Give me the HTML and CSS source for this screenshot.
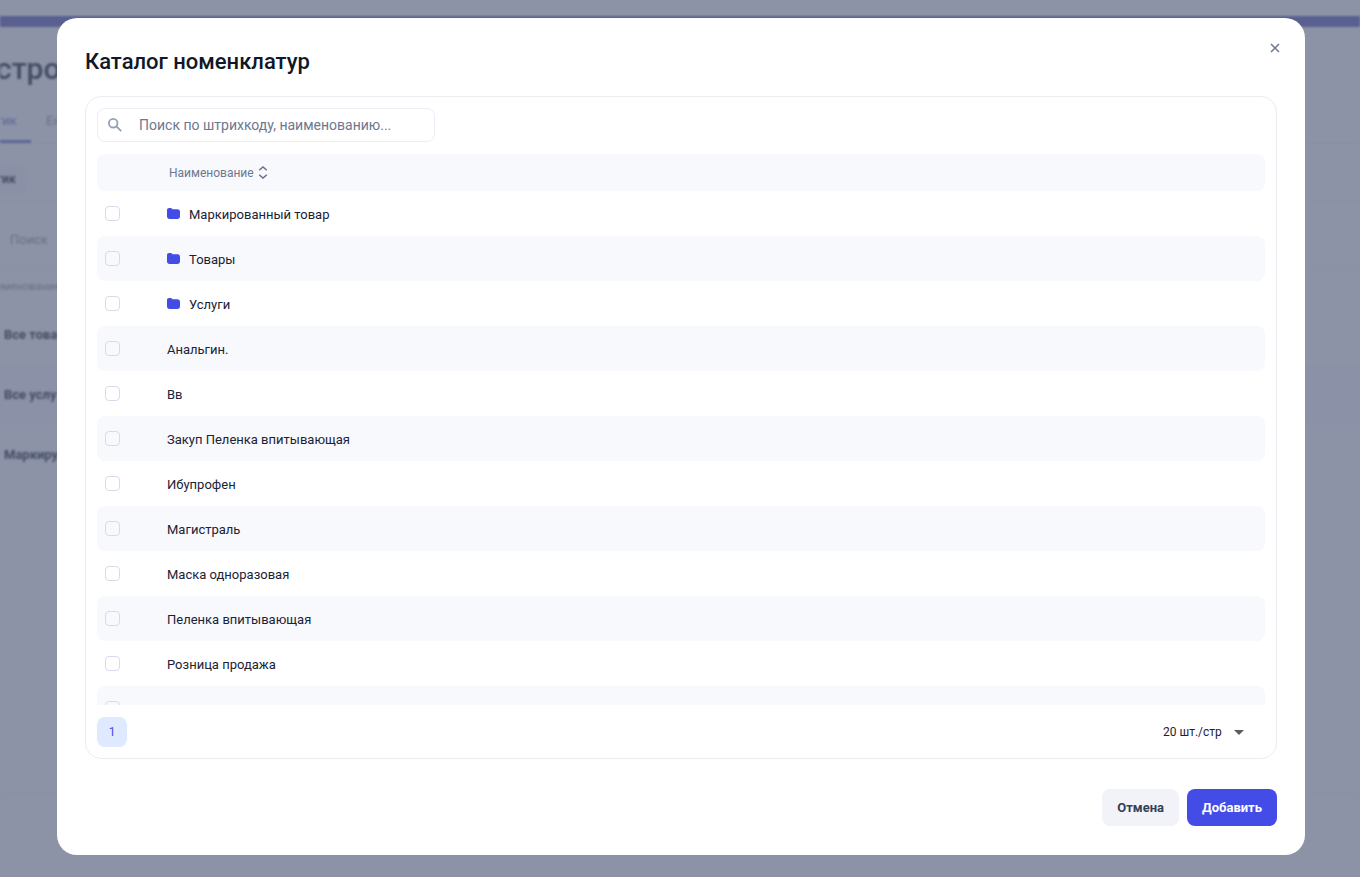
FILE: index.html
```html
<!DOCTYPE html>
<html lang="ru">
<head>
<meta charset="utf-8">
<meta name="viewport" content="width=device-width, initial-scale=1">
<title>Каталог номенклатур</title>
<link rel="stylesheet" href="styles.css">
</head>
<body>
<svg class="sprite" aria-hidden="true">
  <symbol id="folder" viewBox="0 0 13 11"><path d="M0 2.2C0 .8.8 0 2.1 0h1.6c.7 0 1 .2 1.400.7l.4.5h4.800C12 1.200 13 2.200 13 3.900v4.300C13 10 12 11 10.300 11H2.700C1 11 0 10 0 8.200z"/></symbol>
</svg>

<div class="page" aria-hidden="true">
  <div class="page-top"></div>
  <div class="page-bar"></div>
  <div class="page-title">стро</div>
  <div class="page-tabs"><span class="page-tab page-tab-active">тик</span><span class="page-tab">Ен</span></div>
  <div class="page-tools"><span class="page-chip">тик</span></div>
  <div class="page-search">Поиск</div>
  <div class="page-head">именование</div>
  <div class="page-row">Все това</div>
  <div class="page-row page-row-alt">Все услу</div>
  <div class="page-row">Маркиру</div>
  <div class="page-foot"></div>
</div>

<div class="overlay">
  <section class="modal" role="dialog" aria-modal="true" aria-labelledby="title">
    <header class="modal-head">
      <h1 class="modal-title" id="title">Каталог номенклатур</h1>
      <button class="close" type="button" aria-label="Закрыть">
        <svg width="10" height="10" viewBox="0 0 10 10"><path d="M1 1l8 8M9 1L1 9"/></svg>
      </button>
    </header>

    <div class="panel">
      <label class="search">
        <svg class="search-icon" width="14" height="14" viewBox="0 0 14 14"><circle cx="5.200" cy="5.200" r="4.300"/><path d="M8.400 8.400l4.800 4.800"/></svg>
        <input class="search-input" type="text" placeholder="Поиск по штрихкоду, наименованию..." aria-label="Поиск по штрихкоду, наименованию">
      </label>

      <div class="scroller">
        <table class="table">
          <thead>
            <tr>
              <th class="cell-check"></th>
              <th class="cell-name"><button class="sort" type="button">Наименование
                <svg width="10" height="13" viewBox="0 0 10 13"><path d="M1.200 4.200L5 1l3.800 3.200M1.200 8.800L5 12l3.800-3.200"/></svg></button></th>
            </tr>
          </thead>
          <tbody>
            <tr><td class="cell-check"><input class="check" type="checkbox" id="r1"></td><td class="cell-name"><label class="name" for="r1"><svg class="folder" width="13" height="11"><use href="#folder"/></svg>Маркированный товар</label></td></tr>
            <tr><td class="cell-check"><input class="check" type="checkbox" id="r2"></td><td class="cell-name"><label class="name" for="r2"><svg class="folder" width="13" height="11"><use href="#folder"/></svg>Товары</label></td></tr>
            <tr><td class="cell-check"><input class="check" type="checkbox" id="r3"></td><td class="cell-name"><label class="name" for="r3"><svg class="folder" width="13" height="11"><use href="#folder"/></svg>Услуги</label></td></tr>
            <tr><td class="cell-check"><input class="check" type="checkbox" id="r4"></td><td class="cell-name"><label class="name" for="r4">Анальгин.</label></td></tr>
            <tr><td class="cell-check"><input class="check" type="checkbox" id="r5"></td><td class="cell-name"><label class="name" for="r5">Вв</label></td></tr>
            <tr><td class="cell-check"><input class="check" type="checkbox" id="r6"></td><td class="cell-name"><label class="name" for="r6">Закуп Пеленка впитывающая</label></td></tr>
            <tr><td class="cell-check"><input class="check" type="checkbox" id="r7"></td><td class="cell-name"><label class="name" for="r7">Ибупрофен</label></td></tr>
            <tr><td class="cell-check"><input class="check" type="checkbox" id="r8"></td><td class="cell-name"><label class="name" for="r8">Магистраль</label></td></tr>
            <tr><td class="cell-check"><input class="check" type="checkbox" id="r9"></td><td class="cell-name"><label class="name" for="r9">Маска одноразовая</label></td></tr>
            <tr><td class="cell-check"><input class="check" type="checkbox" id="r10"></td><td class="cell-name"><label class="name" for="r10">Пеленка впитывающая</label></td></tr>
            <tr><td class="cell-check"><input class="check" type="checkbox" id="r11"></td><td class="cell-name"><label class="name" for="r11">Розница продажа</label></td></tr>
            <tr><td class="cell-check"><input class="check" type="checkbox" id="r12"></td><td class="cell-name"></td></tr>
          </tbody>
        </table>
      </div>

      <div class="pager">
        <button class="page-number" type="button" aria-current="page">1</button>
        <div class="page-size">
          <select class="page-select" aria-label="Строк на странице"><option>20 шт./стр</option></select>
          <svg class="caret" width="10" height="5" viewBox="0 0 10 5"><path d="M0 0h10L5 5z"/></svg>
        </div>
      </div>
    </div>

    <footer class="actions">
      <button class="button button-cancel" type="button">Отмена</button>
      <button class="button button-add" type="button">Добавить</button>
    </footer>
  </section>
</div>
</body>
</html>
```

FILE: styles.css
```css
* { box-sizing: border-box; }

body {
  margin: 0;
  height: 100vh;
  overflow: hidden;
  font-family: Roboto, "Noto Sans", sans-serif;
  font-size: 13px;
  color: #1a2236;
  background: #fff;
}

button, input, select { font: inherit; color: inherit; }
button { border: 0; cursor: pointer; }

.sprite { position: absolute; width: 0; height: 0; }

/* Page behind the dialog */
.page {
  height: 100vh;
  display: flex;
  flex-direction: column;
  overflow: hidden;
  filter: blur(1px);
  color: #6c7078;
}
.page-top { height: 16px; flex: none; }
.page-bar { height: 11px; flex: none; margin: 0 -4px; background: #9998d0; }
.page-title { height: 76px; margin-left: -4px; line-height: 84px; font-size: 30px; font-weight: 500; }
.page-tabs { display: flex; gap: 31px; height: 41px; line-height: 36px; border-bottom: 1px solid #f4f4f8; color: #b4b7c0; }
.page-tab-active { width: 35px; margin: 0 -16px 0 -4px; border-bottom: 3px solid #a0a4e0; color: #a0a4e0; }
.page-tools { height: 58px; padding-top: 20px; border-bottom: 1px solid #f6f6fa; }
.page-chip { display: block; width: 31px; height: 30px; margin-left: -4px; line-height: 31px; border-radius: 0 8px 8px 0; background: #fafafc; font-size: 12px; font-weight: 700; }
.page-search { height: 68px; padding-left: 10px; line-height: 76px; color: #b4b7c0; border-bottom: 1px solid #fafafc; }
.page-head { height: 34px; margin-left: -4px; line-height: 33px; font-size: 11px; color: #b4b7c0; }
.page-row { height: 60px; padding-left: 4px; line-height: 61px; font-weight: 700; }
.page-row-alt { background: #fcfcfe; }
.page-foot { height: 84px; flex: none; margin-top: auto; border-top: 1px solid #fafafc; }

/* Dialog */
.overlay {
  position: fixed;
  inset: 0;
  display: flex;
  padding: 18px 55px 22px 57px;
  background: rgba(26, 39, 80, .5);
}
.modal {
  flex: 1;
  min-width: 0;
  display: flex;
  flex-direction: column;
  padding: 0 28px 29px;
  border-radius: 20px;
  background: #fff;
}
.modal-head { display: flex; justify-content: space-between; align-items: flex-start; }
.modal-title { margin: 0; padding: 28px 0 18px; font-size: 22px; line-height: 32px; font-weight: 500; color: #101828; }
.close { display: flex; margin: 18px -10px 0 0; padding: 7px; background: none; }
.close path { fill: none; stroke: #6c7690; stroke-width: 1.500; }

.panel {
  flex: 1;
  min-height: 0;
  display: flex;
  flex-direction: column;
  gap: 12px;
  padding: 11px;
  border: 1px solid #ebecf0;
  border-radius: 16px;
}

.search {
  display: flex;
  align-items: center;
  gap: 17px;
  width: 338px;
  height: 34px;
  padding: 0 10px;
  border: 1px solid #ecedf6;
  border-radius: 8px;
}
.search-icon { flex: none; fill: none; stroke: #94a0b4; stroke-width: 1.800; }
.search-input { flex: 1; min-width: 0; padding: 0; border: 0; outline: 0; background: none; font-size: 14px; }
.search-input::placeholder { color: #6c788f; opacity: 1; }

.scroller { flex: 1; min-height: 0; overflow: auto; scrollbar-width: none; }
.table { width: 100%; border-collapse: separate; border-spacing: 0; table-layout: fixed; }
.table th { height: 37px; padding: 0; background: #f8f9fd; font-weight: 400; text-align: left; }
.table td { height: 45px; padding: 0; }
.table tbody tr:nth-child(even) td { background: #f8f9fd; }
.table .cell-check { width: 70px; padding-left: 8px; border-radius: 8px 0 0 8px; }
.table .cell-name { border-radius: 0 8px 8px 0; }
.sort { display: flex; align-items: center; gap: 4px; padding: 0 2px; background: none; font-size: 12px; color: #6c788f; }
.sort path { fill: none; stroke: #64718a; stroke-width: 1.500; }
.check {
  display: block;
  appearance: none;
  width: 15px;
  height: 15px;
  margin: 0;
  border: 1px solid #d8daec;
  border-radius: 4px;
}
.check:checked { background: #444ce7; }
.name { display: flex; align-items: center; line-height: 20px; padding-top: 2px; }
.folder { flex: none; margin-right: 9px; margin-bottom: 2px; fill: #444ce7; }

.pager { display: flex; justify-content: space-between; align-items: center; }
.page-number { width: 30px; height: 30px; padding: 0; border-radius: 8px; background: #dfe9ff; color: #444ce7; font-size: 12px; }
.page-size { display: flex; align-items: center; gap: 12px; margin-right: 21px; }
.page-select { appearance: none; padding: 0; border: 0; background: none; font-size: 12px; }
.caret { fill: #5c5c60; }

.actions { display: flex; justify-content: flex-end; gap: 8px; margin-top: 30px; }
.button { height: 37px; padding: 0 15px; border-radius: 8px; font-weight: 700; }
.button-cancel { background: #f2f3f8; color: #344054; }
.button-add { background: #444ce7; color: #fff; }
```
